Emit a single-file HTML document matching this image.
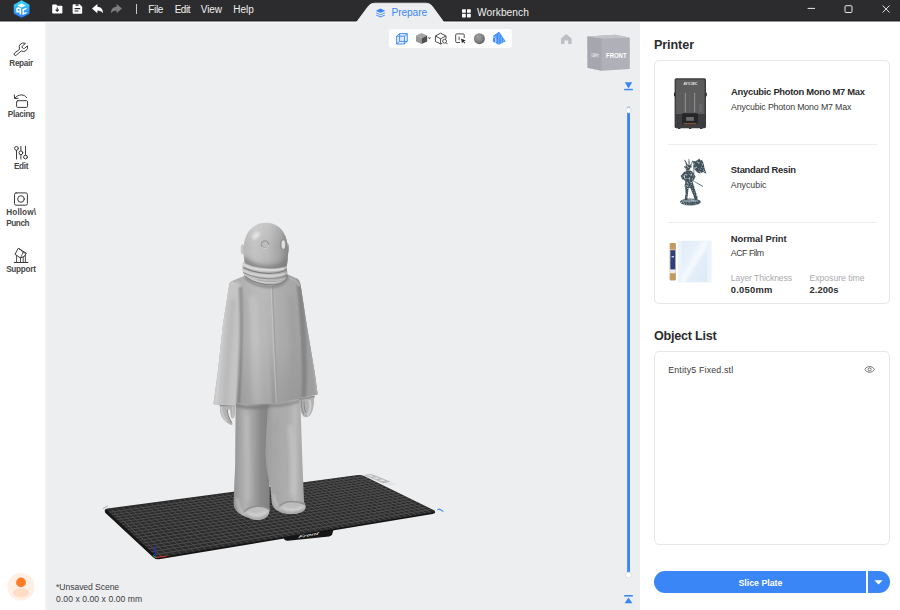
<!DOCTYPE html>
<html lang="en">
<head>
<meta charset="utf-8">
<title>Anycubic Photon Workshop</title>
<style>
*{box-sizing:border-box;margin:0;padding:0}
html,body{width:900px;height:610px;overflow:hidden;background:#fff}
body{font-family:"Liberation Sans",sans-serif;color:#333;position:relative;font-size:10px}
.abs{position:absolute}
.t{position:absolute;white-space:nowrap;line-height:1}
#titlebar{left:0;top:0;width:900px;height:21px;background:#2c2c2e;border-bottom:1px solid #222224}
#sidebar{left:0;top:21px;width:45px;height:589px;background:#fff}
#viewport{left:45px;top:21px;width:595px;height:589px;background:#edeef0;border-top:2px solid #f7f8f9;border-left:1px solid #f5f5f7}
#panel{left:640px;top:21px;width:260px;height:589px;background:#fff}
.menu{color:#f0f0f0;font-size:10px;top:5px}
.sb{font-size:8.1px;color:#333;font-weight:bold;letter-spacing:-0.2px}
.card{position:absolute;border:1px solid #e7e7e9;border-radius:5px;background:#fff}
.h{font-weight:bold;font-size:12.6px;color:#2c2c2e}
.b{font-weight:bold;font-size:9.2px;color:#2c2c2e}
.r{font-size:8.8px;color:#333}
.g{font-size:8.6px;color:#a9a9ad}
</style>
</head>
<body>
<div id="titlebar" class="abs"></div>
<div id="sidebar" class="abs"></div>
<div id="viewport" class="abs"></div>
<div id="panel" class="abs"></div>

<svg class="abs" style="left:0;top:0" width="900" height="610" viewBox="0 0 900 610">
<defs>
  <linearGradient id="gHead" x1="0" y1="0" x2="1" y2="0">
    <stop offset="0" stop-color="#b6b6b6"/><stop offset="0.25" stop-color="#c4c4c4"/><stop offset="0.55" stop-color="#bababa"/><stop offset="0.8" stop-color="#a4a4a4"/><stop offset="1" stop-color="#848484"/>
  </linearGradient>
  <linearGradient id="gHeadV" x1="0" y1="0" x2="0" y2="1">
    <stop offset="0" stop-color="#fff" stop-opacity="0.18"/><stop offset="0.5" stop-color="#fff" stop-opacity="0"/><stop offset="1" stop-color="#000" stop-opacity="0.12"/>
  </linearGradient>
  <linearGradient id="gCoat" gradientUnits="userSpaceOnUse" x1="238" y1="0" x2="300" y2="0">
    <stop offset="0" stop-color="#aeaeae"/><stop offset="0.3" stop-color="#bababa"/><stop offset="0.55" stop-color="#b6b6b6"/><stop offset="0.62" stop-color="#aeaeae"/><stop offset="1" stop-color="#a4a4a4"/>
  </linearGradient>
  <linearGradient id="gLegL" gradientUnits="userSpaceOnUse" x1="233" y1="0" x2="270" y2="0">
    <stop offset="0" stop-color="#8e8e8e"/><stop offset="0.14" stop-color="#a2a2a2"/><stop offset="0.35" stop-color="#b2b2b2"/><stop offset="0.55" stop-color="#a2a2a2"/><stop offset="0.75" stop-color="#8a8a8a"/><stop offset="1" stop-color="#808080"/>
  </linearGradient>
  <linearGradient id="gLegR" gradientUnits="userSpaceOnUse" x1="268" y1="0" x2="306" y2="0">
    <stop offset="0" stop-color="#9c9c9c"/><stop offset="0.15" stop-color="#aaaaaa"/><stop offset="0.5" stop-color="#acacac"/><stop offset="0.72" stop-color="#bababa"/><stop offset="0.9" stop-color="#a8a8a8"/><stop offset="1" stop-color="#9e9e9e"/>
  </linearGradient>
  <linearGradient id="gScarf" x1="0" y1="0" x2="1" y2="0">
    <stop offset="0" stop-color="#c4c4c4"/><stop offset="0.5" stop-color="#c0c0c0"/><stop offset="1" stop-color="#a8a8a8"/>
  </linearGradient>
  <radialGradient id="gSph" cx="0.4" cy="0.35" r="0.7"><stop offset="0" stop-color="#a2a2a2"/><stop offset="0.6" stop-color="#808080"/><stop offset="1" stop-color="#5e5e5e"/></radialGradient>
  <linearGradient id="gCoatV" x1="0" y1="0" x2="0" y2="1"><stop offset="0" stop-color="#000" stop-opacity="0"/><stop offset="1" stop-color="#000" stop-opacity="0.09"/></linearGradient>
  <linearGradient id="gSeam" gradientUnits="userSpaceOnUse" x1="0" y1="300" x2="0" y2="404"><stop offset="0" stop-color="#8c8c8c" stop-opacity="0"/><stop offset="0.5" stop-color="#8c8c8c" stop-opacity="0.15"/><stop offset="1" stop-color="#8c8c8c" stop-opacity="0.6"/></linearGradient>
  <filter id="b1" filterUnits="userSpaceOnUse" x="180" y="200" width="180" height="340"><feGaussianBlur stdDeviation="1"/></filter>
  <filter id="b2" filterUnits="userSpaceOnUse" x="180" y="200" width="180" height="340"><feGaussianBlur stdDeviation="2"/></filter>
  <filter id="b05" filterUnits="userSpaceOnUse" x="180" y="200" width="180" height="340"><feGaussianBlur stdDeviation="0.5"/></filter>
  <clipPath id="cpPlate"><path d="M107.5 508.6 L358 475 Q361.5 474.6 364.5 476.2 L433.5 510 Q436.5 511.6 432.5 512.4 L159 557.6 Q155.8 558 153.4 555.8 L105.2 512 Q103.4 509.4 107.5 508.6 Z"/></clipPath>
  <clipPath id="cpLegL"><use href="#pLegL"/></clipPath>
  <clipPath id="cpLegR"><use href="#pLegR"/></clipPath>
  <clipPath id="cpCoat"><use href="#pCoat"/></clipPath>
  <clipPath id="cpHead"><use href="#pHead"/></clipPath>
  <clipPath id="cpScarf"><use href="#pScarf"/></clipPath>
</defs>

<!-- build plate -->
<g>
  <path d="M280 531 L284.5 539.4 Q285.6 541 288 540.8 L329 536.6 Q331.4 536 332.2 534.2 L334 528 Z" fill="#161616"/>
  <path d="M105 512.5 L153.4 557.4 Q155.8 559.6 159 559.2 L432.5 514 Q436.5 513.2 434.6 511 L433 510 L159 556 L107 509 Z" fill="#141414"/>
  <path d="M107.5 508.6 L358 475 Q361.5 474.6 364.5 476.2 L433.5 510 Q436.5 511.6 432.5 512.4 L159 557.6 Q155.8 558 153.4 555.8 L105.2 512 Q103.4 509.4 107.5 508.6 Z" fill="#2b2b2b"/>
  <g clip-path="url(#cpPlate)"><path d="M111.3 509.4L162.1 556.9M117.1 508.6L168.5 555.9M122.8 507.8L174.9 554.8M128.6 507.0L181.2 553.8M134.3 506.2L187.5 552.7M139.9 505.4L193.8 551.7M145.5 504.6L200.0 550.6M151.1 503.9L206.2 549.6M156.7 503.1L212.3 548.6M162.2 502.3L218.4 547.6M167.7 501.5L224.5 546.6M173.2 500.8L230.6 545.6M178.7 500.0L236.6 544.6M184.1 499.3L242.5 543.6M189.5 498.5L248.4 542.6M194.8 497.8L254.3 541.6M200.2 497.0L260.2 540.7M205.5 496.3L266.0 539.7M210.7 495.6L271.8 538.7M216.0 494.8L277.5 537.8M221.2 494.1L283.3 536.8M226.4 493.4L289.0 535.9M231.6 492.7L294.6 535.0M236.7 492.0L300.2 534.0M241.8 491.2L305.8 533.1M246.9 490.5L311.4 532.2M252.0 489.8L316.9 531.3M257.0 489.1L322.4 530.4M262.0 488.4L327.8 529.5M267.0 487.7L333.2 528.6M271.9 487.1L338.6 527.7M276.9 486.4L344.0 526.8M281.8 485.7L349.3 525.9M286.6 485.0L354.6 525.0M291.5 484.3L359.9 524.1M296.3 483.7L365.1 523.3M301.1 483.0L370.3 522.4M305.9 482.3L375.5 521.5M310.7 481.7L380.7 520.7M315.4 481.0L385.8 519.8M320.1 480.4L390.9 519.0M324.8 479.7L396.0 518.2M329.5 479.1L401.0 517.3M334.1 478.4L406.0 516.5M338.7 477.8L411.0 515.7M343.3 477.1L416.0 514.8M347.9 476.5L420.9 514.0M352.5 475.9L425.8 513.2M357.0 475.2L430.7 512.4M108.0 512.5L365.2 476.4M110.5 514.9L368.9 478.3M113.0 517.3L372.7 480.2M115.5 519.8L376.5 482.1M118.1 522.3L380.4 484.1M120.8 524.8L384.3 486.0M123.5 527.3L388.3 488.0M126.2 529.9L392.3 490.0M128.9 532.5L396.4 492.1M131.7 535.2L400.5 494.1M134.5 537.9L404.7 496.2M137.4 540.7L408.9 498.3M140.3 543.4L413.2 500.5M143.3 546.3L417.6 502.6M146.3 549.1L422.0 504.8M149.4 552.0L426.4 507.1M152.5 555.0L430.9 509.3" stroke="#505050" stroke-width="0.9" fill="none"/></g>
  <path d="M105.6 510.6 L154.6 556.2" stroke="#161616" stroke-width="2.2" fill="none"/>
  <path d="M363.6 475 L371.4 474 L391 481.8 L383.4 483.4 Z" fill="#bcbcbe"/>
  <path d="M367.4 475.4 L371 475 L374 476.2 L370.4 476.7 Z M373 477.7 L376.6 477.3 L379.6 478.5 L376 479 Z M378.8 480 L382.4 479.6 L385.4 480.8 L381.8 481.3 Z" fill="#e4e4e6"/>
  <path d="M383.4 483.4 L391 481.8 L397 484.4 L389.6 486 Z" fill="#e6e6e8"/>
  <text x="0" y="0" transform="translate(297.8 538.2) rotate(-9.6) scale(1.6 0.75) skewX(-25)" font-family="Liberation Sans, sans-serif" font-weight="bold" font-size="5" fill="#dcdcdc">Front</text>
  <path d="M437.4 509.6 L439.6 509.2 L443.4 511.4" stroke="#4a90ff" stroke-width="1.2" fill="none"/>
  <path d="M103 508.6 L108 505.8" stroke="#9a9a9a" stroke-width="0.8" fill="none"/>
  <path d="M155.5 557.4 V546" stroke="#2030e0" stroke-width="1" fill="none"/>
  <path d="M155.6 557.6 L167 556" stroke="#e03030" stroke-width="1" fill="none"/>
  <path d="M155.6 557.6 L153 555.4" stroke="#20b030" stroke-width="1.2" fill="none"/>
</g>

<!-- figure -->
<g id="fig">
  <!-- trousers -->
  <path id="pLegL" d="M235.7 401 L235.2 465 L233.6 503 C233.6 511 240 515 249 518 C253 520 258 520.6 262 519.6 C267 518 269.6 515 269.7 509 L269.6 487 L269 440 L270 401 Z" fill="url(#gLegL)"/>
  <path id="pLegR" d="M268 401 C267.4 420 265.6 440 265.6 455 C265.8 470 269.4 480 270.4 487 L272 504 C274 510.5 282 514 290 514 C298 514.2 305.6 512 305.8 507 C305.6 504.6 304.4 503 304 501 L302.5 465 L300.2 397 Z" fill="url(#gLegR)"/>
  <g clip-path="url(#cpLegL)">
    
    <path d="M247 415 C246 445 250 470 248 500" stroke="#c4c4c4" stroke-width="4" fill="none" filter="url(#b2)" opacity="0.6"/>
    <path d="M238 404 C237 440 236 480 235 505" stroke="#9c9c9c" stroke-width="2.4" fill="none" filter="url(#b1)" opacity="0.7"/>
    <path d="M236 405.6 C250 408.6 262 407.6 270 405.6" stroke="#7a7a7a" stroke-width="3.4" fill="none" filter="url(#b1)" opacity="0.8"/>
    <path d="M244 512 C246 509 252 506.4 258 506.4 C264 506.4 268 508 269.6 510 C269 516 265 519.6 258 520 C251 519.6 246 516 244 512 Z" fill="#bebebe" filter="url(#b05)"/>
    <path d="M248 513 C253 516.2 261 516 266.6 511.6" stroke="#d4d4d4" stroke-width="2.4" fill="none" filter="url(#b1)"/>
    <path d="M246 515.4 C251 520 262 521 268.6 514" stroke="#9a9a9a" stroke-width="1.6" fill="none" filter="url(#b1)"/>
    <path d="M243.4 512.6 C246 509 252 506.2 258 506.2 C264 506.2 268 507.8 270 510" stroke="#8c8c8c" stroke-width="1.5" fill="none" filter="url(#b05)" opacity="0.9"/>
    <path d="M237 498 C237.6 506 240 511 245 514.6" stroke="#c8c8c8" stroke-width="2" fill="none" filter="url(#b1)" opacity="0.8"/>
  </g>
  <g clip-path="url(#cpLegR)">
    <path d="M290 425 C293 450 294 475 293 495" stroke="#cacaca" stroke-width="4.5" fill="none" filter="url(#b2)" opacity="0.65"/>
    <path d="M276 420 C275 450 275 480 277 503" stroke="#a0a0a0" stroke-width="3" fill="none" filter="url(#b2)" opacity="0.7"/>
    <path d="M268 420 C268 450 270 480 272 503" stroke="#a8a8a8" stroke-width="2" fill="none" filter="url(#b1)" opacity="0.7"/>
    <path d="M266 405.6 C280 406.6 292 403.6 301 400.6" stroke="#808080" stroke-width="3" fill="none" filter="url(#b1)" opacity="0.7"/>
    <path d="M278.6 507 C281 504 286 501.6 291 501.6 C297 501.6 302 503 304.6 504.6 C306.6 508 304 513 292 514.2 C285 514 280.6 511 278.6 507 Z" fill="#bcbcbc" filter="url(#b05)"/>
    <path d="M283 508 C288 511 298 510.6 303.6 506.6" stroke="#d2d2d2" stroke-width="2.4" fill="none" filter="url(#b1)"/>
    <path d="M281 510.4 C286 514.6 298 515 305.6 508.6" stroke="#9a9a9a" stroke-width="1.6" fill="none" filter="url(#b1)"/>
    <path d="M278 507.8 C281 504 286 501.4 291 501.4 C297 501.4 302 502.8 305 504.6" stroke="#8c8c8c" stroke-width="1.5" fill="none" filter="url(#b05)" opacity="0.9"/>
    <path d="M273.6 494 C274 500 276 505 280 509" stroke="#c6c6c6" stroke-width="2" fill="none" filter="url(#b1)" opacity="0.8"/>
  </g>
  <!-- hands -->
  <path d="M220 404 C219.6 409 220.2 414 221.6 416.6 C223.4 420 226.6 423 230 424.6 C231.4 425.2 232.8 424.8 232.6 423.6 C232 421.6 229.6 418.6 228.6 416 C227.6 413.6 227.4 411 228.4 409.6 C229.2 408.8 230 409.6 230.2 411 C230.4 414 230.6 416.6 231.6 418 C232.6 419 233.8 418.4 234.4 416.6 C235.2 413.6 235 409 234.8 404 Z" fill="#b2b2b2"/>
  <path d="M221.4 406 C221.2 412 222.6 417 227 421.4" stroke="#c8c8c8" stroke-width="2" fill="none" filter="url(#b05)"/>
  <path d="M227.6 409.6 C227 413 228 416.6 231.6 422.6" stroke="#8a8a8a" stroke-width="1.1" fill="none" filter="url(#b05)"/>
  <path d="M232.6 406 C233 411 233 415 232.4 417.6" stroke="#c2c2c2" stroke-width="1.4" fill="none" filter="url(#b05)"/>
  <path d="M219.6 405.6 H235.4" stroke="#8a8a8a" stroke-width="1.4" fill="none" filter="url(#b05)" opacity="0.8"/>
  <path d="M299.4 397 C299 404 300 411 302.6 415.6 C304.6 418.4 308.6 417.6 310.6 414.6 C313 411 314.4 404 314 396 Z" fill="#b2b2b2"/>
  <path d="M309.4 400 C311 405 310.4 411 307.6 415.4" stroke="#cccccc" stroke-width="2.4" fill="none" filter="url(#b05)"/>
  <path d="M301.4 400 C301.2 406 302.2 411 303.8 414 M304 401 C304 406 304.6 410 306 412.6" stroke="#8c8c8c" stroke-width="1.1" fill="none" filter="url(#b05)"/>
  <path d="M299 399.4 L315 396.4" stroke="#8a8a8a" stroke-width="1.6" fill="none" filter="url(#b05)" opacity="0.8"/>
  <!-- coat -->
  <path id="pCoat" d="M245 275.4 L232 281 C230 282 229.2 283.6 229 286 L223 324 L217.7 373 L213.4 404.3 L235.7 405.7 L235.8 402.7 C250 404.6 268 405 280 402.4 L300 398.6 L300 397.8 L317.7 394.5 L314.8 373 L306.6 324 L300.6 285 C300.2 281.6 298.8 279.4 296.4 278.2 L287 274 Z" fill="url(#gCoat)"/>
  <g clip-path="url(#cpCoat)">
    <!-- left sleeve -->
    <path d="M226 278 L241 286 C242 320 241.4 360 238 408 L210 408 Z" fill="#c5c5c5"/>
    <path d="M233 300 C230 340 227 370 225 406" stroke="#b4b4b4" stroke-width="5" fill="none" filter="url(#b2)" opacity="0.8"/>
    <path d="M226 292 C221.6 340 218.6 370 216 404" stroke="#d2d2d2" stroke-width="3" fill="none" filter="url(#b1)" opacity="0.9"/>
    <path d="M240.4 287 C242 320 241.4 360 238.2 406" stroke="#868686" stroke-width="3" fill="none" filter="url(#b1)" opacity="0.9"/>
    <!-- right sleeve -->
    <path d="M296 276 L304 280 L320 394 L300 400 C303 360 301 320 296 286 Z" fill="#9e9e9e"/>
    <path d="M299.8 286 C302.8 320 305.8 360 303.6 398" stroke="#828282" stroke-width="5" fill="none" filter="url(#b1)" opacity="0.9"/>
    <path d="M305.2 292 C310.2 325 314.4 365 317 394" stroke="#b8b8b8" stroke-width="2.2" fill="none" filter="url(#b1)" opacity="0.85"/>
    <!-- body -->
    <path d="M252 296 C256 330 254 370 258 404" stroke="#c4c4c4" stroke-width="8" fill="none" filter="url(#b2)" opacity="0.7"/>
    <path d="M246 300 C247 330 246 370 245 404" stroke="#a8a8a8" stroke-width="3" fill="none" filter="url(#b2)" opacity="0.6"/>
    <path d="M238 340 L300 340 L300 406 L236 406 Z" fill="url(#gCoatV)"/>
    <path d="M268.4 300 C269.6 335 272 370 274.2 404" stroke="url(#gSeam)" stroke-width="4" fill="none" filter="url(#b1)"/>
    <path d="M271.2 286 C272.2 320 274.2 360 276.4 404" stroke="#c8c8c8" stroke-width="0.9" fill="none" filter="url(#b05)" opacity="0.8"/>
    <path d="M272.6 286 C273.6 320 275.6 360 277.8 404" stroke="#9c9c9c" stroke-width="1.3" fill="none" filter="url(#b05)" opacity="0.75"/>
    <path d="M291 296 C294 330 295 370 294 400" stroke="#9c9c9c" stroke-width="7" fill="none" filter="url(#b2)" opacity="0.6"/>
    <path d="M231 284.8 C234 282 238 282 240.6 285.4" stroke="#cacaca" stroke-width="1.4" fill="none" filter="url(#b1)"/>
    <path d="M289 278 C293 279 297 281 299.4 286" stroke="#b4b4b4" stroke-width="1.2" fill="none" filter="url(#b05)"/>
    <path d="M245 277.2 C253 285 262 286.6 270 287 C279 287 285 283 288 277" stroke="#7a7a7a" stroke-width="2.2" fill="none" filter="url(#b1)" opacity="0.85"/>
    <path d="M236 402.6 C250 404.6 268 405 280 402.4 L300 398.6" stroke="#a0a0a0" stroke-width="1" fill="none" filter="url(#b05)" opacity="0.7"/>
  </g>
  <!-- head -->
  <ellipse cx="242.6" cy="249.6" rx="1.9" ry="5" fill="#c6c6c6"/>
  <path d="M287.6 243 C289.6 245 289.6 252 287.6 254 Z" fill="#a2a2a2"/>
  <path id="pHead" d="M244.8 264 C242.6 252 242.8 240 248.6 231.6 C256.6 219.8 275.6 220 283 231.6 C288.8 240.6 289 253 286.8 266 C278 272 254 271.6 244.8 264 Z" fill="url(#gHead)"/>
  <g clip-path="url(#cpHead)">
    <rect x="240" y="220" width="52" height="54" fill="url(#gHeadV)"/>
    <ellipse cx="256" cy="235.4" rx="4.6" ry="2.7" transform="rotate(-42 256 235.4)" fill="#e2e2e2" filter="url(#b1)"/>
    <path d="M243 259 C254 271 278 272 288 261" stroke="#7a7a7a" stroke-width="6" fill="none" filter="url(#b2)" opacity="0.8"/>
    <path d="M286 234 C289 245 289 256 286 266" stroke="#8a8a8a" stroke-width="3" fill="none" filter="url(#b1)" opacity="0.6"/>
  </g>
  <circle cx="265" cy="244.4" r="3.7" fill="#bcbcbc" stroke="#868686" stroke-width="0.8"/>
  <path d="M262 247 A3.7 3.7 0 0 0 268.6 245" stroke="#dedede" stroke-width="0.8" fill="none"/>
  <ellipse cx="282.6" cy="244.4" rx="2.5" ry="4.8" fill="#8e8e8e"/><ellipse cx="283.3" cy="244.6" rx="1.9" ry="4.3" fill="#dedede"/>
  <!-- scarf -->
  <path id="pScarf" d="M243.3 262 C241.6 266 242 273 245 275.7 C248 279 254 281.6 261.7 283.3 C266 284.6 272 285 278.3 283.7 C283 282.6 287.3 279 287.4 274 L286.6 265.4 C280 269.6 256 270.4 243.3 262 Z" fill="url(#gScarf)"/>
  <g clip-path="url(#cpScarf)">
    <path d="M243.3 264.4 C252 270.4 276 272 287 267.4" stroke="#d8d8d8" stroke-width="2.2" fill="none" filter="url(#b05)"/>
    <path d="M243 271 C254 276.4 276 278 287.4 272.6" stroke="#d2d2d2" stroke-width="2" fill="none" filter="url(#b05)"/>
    <path d="M250 279.6 C260 283 276 283.6 286 278.4" stroke="#cecece" stroke-width="1.8" fill="none" filter="url(#b05)"/>
    <path d="M243.4 267.7 C250 271 258 273 268.3 273.3 C276 273.4 283 272 287 269.3" stroke="#7e7e7e" stroke-width="1.3" fill="none" filter="url(#b05)"/>
    <path d="M242.5 272.3 C250 276 258 278.4 268.3 278.7 C276 278.8 283 277.4 287.4 275" stroke="#909090" stroke-width="1.1" fill="none" filter="url(#b05)"/>
    <path d="M257 279.7 C263 281.6 270 282 276 281.4 C279 281 281.6 280.4 283 279.7" stroke="#a0a0a0" stroke-width="0.8" fill="none" filter="url(#b05)"/>
    <path d="M283 262 C288 268 288 278 282 284" stroke="#8c8c8c" stroke-width="3" fill="none" filter="url(#b1)" opacity="0.55"/>
  </g>
  <path d="M244.6 275.4 C248 279.4 254 281.8 261.7 283.6 C266 284.9 272 285.3 278.3 284 C283 282.8 286.6 280 287.5 275.4" stroke="#7c7c7c" stroke-width="1" fill="none" filter="url(#b05)"/>
</g>

<!-- viewport toolbar -->
<rect x="389" y="29" width="123" height="19" rx="3" fill="#fff"/>
<g>
  <!-- wire cube -->
  <path d="M396.6 36.2 H404.4 V44 H396.6 Z M399.6 33.6 H407.3 V41.4 H399.6 Z" fill="#d6e6ff" fill-opacity="0.7" stroke="#3b86f7" stroke-width="0.9" stroke-linejoin="round"/>
  <path d="M396.6 36.2 L399.6 33.6 M404.4 36.2 L407.3 33.6 M404.4 44 L407.3 41.4 M396.6 44 L399.6 41.4" stroke="#3b86f7" stroke-width="0.9" fill="none"/>
  <!-- solid cube -->
  <path d="M421.6 33 L427.2 35.6 L421.6 38.2 L416 35.6 Z" fill="#a4a4a4"/>
  <path d="M416 35.6 L421.6 38.2 V44 L416 41.4 Z" fill="#969696"/>
  <path d="M427.2 35.6 L421.6 38.2 V44 L427.2 41.4 Z" fill="#4e4e4e"/>
  <path d="M428 37.4 H430.8 L429.4 39.2 Z" fill="#333"/>
  <!-- cube + magnifier -->
  <path d="M440.6 33.2 L446 36 V39 M440.6 33.2 L435.4 36 V41.4 L440.6 44 V38.8 L435.4 36 M440.6 38.8 L446 36 M440.6 44 L442.4 43.2" fill="none" stroke="#3a3a3a" stroke-width="0.9" stroke-linejoin="round"/>
  <circle cx="444.6" cy="41.2" r="1.9" fill="none" stroke="#3a3a3a" stroke-width="0.9"/>
  <path d="M446 42.6 L447.6 44.2" stroke="#3a3a3a" stroke-width="0.9"/>
  <!-- select -->
  <path d="M464.2 38 V34.8 A0.9 0.9 0 0 0 463.3 33.9 H456.6 A0.9 0.9 0 0 0 455.7 34.8 V41.6 A0.9 0.9 0 0 0 456.6 42.5 H460" fill="none" stroke="#3a3a3a" stroke-width="0.9"/>
  <path d="M459.1 36.6 V40.2" stroke="#3a3a3a" stroke-width="0.9"/>
  <path d="M461 38.6 L465.8 40.6 L463.8 41.2 L465.4 43 L464.6 43.6 L463 41.8 L462 43.4 Z" fill="#2a2a2a"/>
  <!-- sphere -->
  <circle cx="479.4" cy="38.7" r="5.5" fill="url(#gSph)"/>
  <!-- prism -->
  <path d="M499 32.2 L505.2 41.4 L498.6 44.8 L492.8 41.6 L493.4 36 Z" fill="#3b8dff"/>
  <path d="M499 32.2 L498.6 44.8 M496 34.4 L495.8 43.2 M501.4 35.8 L501.2 43.4 M503.4 38.8 L503.2 42.4" stroke="#a9ccff" stroke-width="0.6" fill="none"/>
  <path d="M493.4 36 L499 32.2 L505.2 41.4" stroke="#2a7af0" stroke-width="0.7" fill="none"/>
  <path d="M493.6 37 C495.4 37 496.2 39 495.6 42.6" stroke="#dceaff" stroke-width="0.8" fill="none"/>
</g>


<!-- home + cube -->
<path d="M566.2 34 L571.6 38.6 V44 H568.2 V40.6 H564.4 V44 H561 V38.6 Z" fill="#bdbdc4"/>
<path d="M587.4 36.4 L615.4 34.8 L629.8 37.8 L629.8 69 L601.6 70.8 L587.6 67.8 Z" fill="#b0b0b8"/>
<path d="M587.4 36.4 L601.6 38.6 L601.6 70.8 L587.6 67.8 Z" fill="#a6a6ae"/>
<path d="M587.4 36.4 L615.4 34.8 L629.8 37.8 L601.6 38.6 Z" fill="#c2c2c8"/>
<text x="606" y="57.6" font-family="Liberation Sans, sans-serif" font-weight="bold" font-size="6.6" fill="#fff" textLength="20.6" lengthAdjust="spacingAndGlyphs">FRONT</text>
<text x="0" y="0" transform="translate(591.4 56.6) skewY(10)" font-family="Liberation Sans, sans-serif" font-weight="bold" font-size="5.6" fill="#f0f0f4" textLength="7.4" lengthAdjust="spacingAndGlyphs">LEFT</text>

<!-- layer slider -->
<path d="M624.8 82.2 H632.2 L628.5 88.4 Z" fill="#3b86f7"/>
<rect x="624.2" y="88.8" width="8.6" height="1.5" fill="#3b86f7"/>
<rect x="627.1" y="106.8" width="2.9" height="468.2" fill="#3b86f7"/>
<circle cx="628.5" cy="110.2" r="2.7" fill="#fff" stroke="#d4d4d8" stroke-width="0.7"/>
<circle cx="628.5" cy="575" r="2.9" fill="#fff" stroke="#d4d4d8" stroke-width="0.7"/>
<rect x="624.2" y="595" width="8.6" height="1.6" fill="#3b86f7"/>
<path d="M628.5 597.6 L632.4 603.2 H624.6 Z" fill="#3b86f7"/>

<!-- avatar -->
<circle cx="21" cy="586.8" r="13.7" fill="#fff0e6"/>
<ellipse cx="21" cy="592.8" rx="8.2" ry="4.6" fill="#ffdcc6"/>
<circle cx="21" cy="582.4" r="4.9" fill="#ff7d26"/>
</svg>

<!-- TITLEBAR -->
<svg class="abs" style="left:0;top:0" width="900" height="24" viewBox="0 0 900 24">
  <defs>
    <linearGradient id="lg" x1="0" y1="0" x2="0" y2="1"><stop offset="0" stop-color="#38dcff"/><stop offset="1" stop-color="#2a7bf5"/></linearGradient>
  </defs>
  <!-- logo -->
  <path d="M21.6 0.6 L29.2 4.8 L29.2 13.4 L21.6 17.6 L14 13.4 L14 4.8 Z" fill="url(#lg)" stroke="url(#lg)" stroke-width="0.5" stroke-linejoin="round"/>
  <path d="M21.6 3.4 L25.8 5.5 L21.6 7.6 L17.4 5.5 Z" fill="#fff"/>
  <path d="M17 12.6 V8.8 L18.6 7.9 L20.4 9 V14.4 M17 11 L20.4 12" fill="none" stroke="#fff" stroke-width="1.5"/>
  <path d="M26.6 8.4 L23.2 9.8 V14 L26.6 12.6" fill="none" stroke="#fff" stroke-width="1.5"/>
  <!-- open -->
  <path d="M52.6 4.6 h3.6 l1.2 1.2 h4.2 a0.8 0.8 0 0 1 0.8 0.8 v6.2 a0.8 0.8 0 0 1 -0.8 0.8 h-8.6 a0.8 0.8 0 0 1 -0.8 -0.8 v-7.4 a0.8 0.8 0 0 1 0.8 -0.8z" fill="#fff"/>
  <path d="M57.2 7.4 v3.6 M55.6 9.6 l1.6 1.6 l1.6 -1.6" fill="none" stroke="#2c2c2e" stroke-width="1.1"/>
  <!-- save -->
  <path d="M73.6 4.2 h6 l2.6 2.6 v6 a1 1 0 0 1 -1 1 h-7.6 a1 1 0 0 1 -1 -1 v-7.6 a1 1 0 0 1 1 -1z" fill="#fff"/>
  <path d="M75.6 4.4 h3 v1.4 h-3z" fill="#2c2c2e"/><path d="M74.6 8.6 h5.6 M74.6 11 h3.8" stroke="#2c2c2e" stroke-width="1.2" fill="none"/>
  <!-- undo -->
  <path d="M92 8.6 L97.4 4 V6.8 C101 7 103 9.4 103 13.2 C101.6 11.2 100 10.4 97.4 10.4 V13.2 Z" fill="#fff"/>
  <!-- redo -->
  <path d="M122 8.6 L116.6 4 V6.8 C113 7 111 9.4 111 13.2 C112.4 11.2 114 10.4 116.6 10.4 V13.2 Z" fill="#7d7e82"/>
  <rect x="136" y="4" width="1" height="10" fill="#c9c9cc"/>
  <!-- tab -->
  <rect x="0" y="21" width="900" height="1" fill="#2c2c2e" fill-opacity="0.5"/>
  <path d="M356.4 23 L357 21.6 L368.4 6.2 Q370.6 3.2 374.6 3.2 H426 Q430 3.2 432.2 6.2 L443.4 21.6 L444 23 Z" fill="#edeef0" stroke="#f6f7f8" stroke-width="0.8"/>
  <rect x="357.6" y="21.4" width="85.4" height="2.6" fill="#edeef0"/>
  <!-- prepare icon -->
  <g fill="#3b86f7">
    <path d="M380.5 8.6 L385.2 10.8 L380.5 13 L375.8 10.8 Z"/>
    <path d="M376.6 12.6 L375.8 13 L380.5 15.2 L385.2 13 L384.4 12.6 L380.5 14.4 Z"/>
    <path d="M376.6 14.8 L375.8 15.2 L380.5 17.4 L385.2 15.2 L384.4 14.8 L380.5 16.6 Z"/>
  </g>
  <!-- workbench icon -->
  <g fill="#fff">
    <rect x="462" y="9.2" width="3.8" height="3.6" rx="0.6"/><rect x="467" y="9.2" width="3.8" height="3.6" rx="0.6"/>
    <rect x="462" y="13.8" width="3.8" height="3.6" rx="0.6"/><rect x="467" y="13.8" width="3.8" height="3.6" rx="0.6"/>
  </g>
  <!-- window controls -->
  <rect x="807.6" y="7.9" width="7.4" height="1" fill="#e8e8e8"/>
  <rect x="845" y="5.7" width="7" height="6.8" rx="1" fill="none" stroke="#e8e8e8" stroke-width="1"/>
  <path d="M882.6 5.5 L889.6 12.5 M889.6 5.5 L882.6 12.5" stroke="#e8e8e8" stroke-width="1" fill="none"/>
</svg>

<!-- SIDEBAR -->

<svg class="abs" style="left:0;top:30px" width="45" height="250" viewBox="0 30 45 250" fill="none" stroke="#3c3c3c" stroke-width="1" stroke-linecap="round" stroke-linejoin="round">
  <!-- repair -->
  <path transform="translate(-0.3 0.6) translate(23.6 47) scale(0.93) translate(-23.6 -47)" stroke-width="1.07" d="M19.44 48.36 A4.6 4.6 0 0 1 25.88 42.55 L22.84 45.11 A1.7 1.7 0 0 0 25.02 47.71 L28.06 45.15 A4.6 4.6 0 0 1 21.34 50.56 L16.02 55.16 A1.45 1.45 0 0 1 14.12 52.96 Z"/>
  <!-- placing -->
  <rect x="16.6" y="100.7" width="10.9" height="6.7" rx="1"/>
  <path d="M26.6 97.6 C24.6 94 18.6 93.6 14.8 98.2"/>
  <path d="M14.3 95 L14.6 98.5 L18 98.4" />
  <!-- edit -->
  <circle cx="16.5" cy="148.4" r="1.9"/><path d="M16.5 150.4 V159"/>
  <circle cx="20.9" cy="152.8" r="1.9"/><path d="M20.9 146.3 V150.8 M20.9 154.8 V159"/>
  <circle cx="25.5" cy="157" r="1.9"/><path d="M25.5 146.3 V155"/>
  <!-- hollow -->
  <rect x="14.5" y="192.9" width="12.9" height="12.3" rx="1.6"/>
  <circle cx="21" cy="199" r="3.3"/>
  <!-- support -->
  <path d="M14.2 262.5 H28"/>
  <path d="M18.6 248.5 L26.2 253.2 L24.4 256.4 L20.5 258 L15.3 254.5 Z"/>
  <path d="M18.6 248.5 L21.2 250 L23 252.6 L20.5 258 M23 252.6 L26.2 253.2" stroke-width="0.8"/>
  <path d="M16.6 255.6 V262.5 M20.5 258 V262.5 M25.4 255.2 V262.5 M23.2 257 V262.5" stroke-width="0.9"/>
</svg>

<!-- STATUS -->

<!-- PANEL -->
<div class="card" style="left:654px;top:60px;width:236px;height:243.5px"></div>
<div class="abs" style="left:668px;top:144px;width:209px;height:1px;background:#ededf0"></div>
<div class="abs" style="left:668px;top:222px;width:209px;height:1px;background:#ededf0"></div>

<div class="card" style="left:654px;top:351px;width:236px;height:194px"></div>

<div class="abs" style="left:654px;top:571px;width:212px;height:22px;background:#3b86f7;border-radius:11px 0 0 11px"></div>
<div class="abs" style="left:867.5px;top:571px;width:22.5px;height:22px;background:#3b86f7;border-radius:0 11px 11px 0"></div>
<svg class="abs" style="left:870px;top:576px" width="16" height="12" viewBox="870 576 16 12"><path d="M874.4 580.2 H882.6 L878.5 584.6 Z" fill="#fff"/></svg>
<svg class="abs" style="left:660px;top:70px" width="64" height="220" viewBox="660 70 64 220">
  <defs>
    <filter id="pb" x="-10%" y="-10%" width="120%" height="120%"><feGaussianBlur stdDeviation="0.35"/></filter>
    <filter id="spk" x="-5%" y="-5%" width="110%" height="110%">
      <feTurbulence type="fractalNoise" baseFrequency="0.55" numOctaves="2" seed="7" result="n"/>
      <feColorMatrix in="n" type="matrix" values="0 0 0 0 0.55  0 0 0 0 0.65  0 0 0 0 0.69  3 0 0 0 -1.6" result="sp"/>
      <feComposite in="sp" in2="SourceAlpha" operator="in" result="spi"/>
      <feMerge result="m"><feMergeNode in="SourceGraphic"/><feMergeNode in="spi"/></feMerge>
      <feGaussianBlur in="m" stdDeviation="0.3"/>
    </filter>
    <linearGradient id="gFilm" x1="0" y1="0" x2="1" y2="1">
      <stop offset="0" stop-color="#e0ecf8"/><stop offset="0.35" stop-color="#e8f1fa"/><stop offset="0.5" stop-color="#f5fafe"/><stop offset="0.62" stop-color="#e3eef9"/><stop offset="1" stop-color="#dceaf7"/>
    </linearGradient>
  </defs>
  <!-- printer -->
  <g filter="url(#pb)">
    <rect x="674.6" y="78.2" width="31.4" height="50" rx="1.6" fill="#3a3a3c"/>
    <rect x="676" y="79.6" width="28.6" height="34.6" rx="0.8" fill="#5b5b5d"/>
    <rect x="674" y="92.6" width="1.2" height="3.6" fill="#2a2a2a"/><rect x="705.6" y="92.6" width="1.2" height="3.6" fill="#2a2a2a"/>
    <rect x="684.8" y="92.8" width="1.1" height="19.4" fill="#8e8e90"/><rect x="694.1" y="92.8" width="1.1" height="19.4" fill="#8e8e90"/>
    <rect x="689.6" y="92.8" width="0.6" height="19.4" fill="#6a6a6c"/>
    <rect x="699" y="104" width="3.4" height="8" fill="#66666a"/>
    <rect x="675.2" y="114.2" width="30.2" height="13.4" fill="#3e3e40"/>
    <rect x="682" y="113.2" width="16" height="11" rx="0.8" fill="#262628"/>
    <rect x="686.2" y="117" width="7.6" height="3.8" fill="#6c6c70"/>
    <rect x="683.6" y="123.4" width="12.8" height="0.7" fill="#c46a3a"/>
    <rect x="678" y="128" width="2.4" height="0.9" fill="#2a2a2a"/><rect x="689" y="128" width="2.4" height="0.9" fill="#2a2a2a"/><rect x="700" y="128" width="2.4" height="0.9" fill="#2a2a2a"/>
    <text x="683.4" y="85.4" font-family="Liberation Sans, sans-serif" font-weight="bold" font-size="3" fill="#e8e8e8" textLength="14" lengthAdjust="spacingAndGlyphs">ANYCUBIC</text>
  </g>
  <!-- resin figure -->
  <g filter="url(#spk)" fill="#42535b">
    <ellipse cx="690.4" cy="202" rx="10.4" ry="3.4" fill="#4a5b63"/>
    <ellipse cx="689.8" cy="200.6" rx="8.4" ry="1.7" fill="#7a8e97"/>
    <path d="M685 185 L688.8 186.4 L688 193 L687.4 200 L684.6 200 L685.6 193 Z"/>
    <path d="M689.6 186 L693.6 185 L695.4 191 L697.6 197 L697.2 200 L694.8 199.8 L692.8 194 Z"/>
    <path d="M684.4 186.6 L685.4 181.6 L684.6 176 L683.6 172.6 L686.4 170.2 L690.6 170.4 L693.6 172.6 L693.4 177 L692.4 181.6 L694.4 186.4 L689.4 188 Z"/>
    <path d="M683.8 172.4 L680.6 175.8 L682 179 L685.4 181 L686 179.4 L683.4 176.6 L685 174 Z"/>
    <path d="M693.4 172.8 L695.6 176.6 L693.6 180.6 L692.4 179.6 L693.4 176.6 Z"/>
    <ellipse cx="687.8" cy="167.4" rx="2.5" ry="2.8"/>
    <path d="M684.6 166 L691.2 165.6 L691.8 167.4 L684 167.6 Z"/>
    <path d="M686.4 165.6 L684.2 160 L685 159.8 L687.6 164.6 Z M688.6 164.8 L688.4 159.2 L689.2 159.2 L689.8 165 Z M690 165.6 L692.6 160.4 L693.2 160.8 L691 166.2 Z"/>
    <path d="M693.8 161.4 L697 160.4 L699.4 158.4 L700.2 160.6 L702 160 L703.6 163.4 L704.6 168.6 L706.4 173.8 L703 172 L700 173.6 L697.4 172.6 L694.2 169 Z" fill="#3e4f58"/>
    <path d="M693.5 161 L693.9 176" stroke="#42535b" stroke-width="0.8" fill="none"/>
    <path d="M689 178.4 L702.8 186.4" stroke="#4e6068" stroke-width="0.9" fill="none"/>
  </g>
  <!-- film -->
  <g filter="url(#pb)">
    <rect x="669.7" y="243" width="6.2" height="37.4" rx="0.8" fill="#c59a62"/>
    <rect x="669.9" y="249.6" width="5.8" height="23.6" fill="#e9e9ee"/>
    <rect x="670.3" y="250.2" width="5" height="19.2" fill="#2d3f7c"/>
    <rect x="671.6" y="256" width="2.4" height="1.4" fill="#c8d0e8"/>
    <rect x="677.8" y="240.6" width="33.9" height="42" fill="#ecf4fb"/>
    <rect x="681.8" y="241.2" width="25.6" height="40.8" fill="url(#gFilm)"/>
  </g>
</svg>
<svg class="abs" style="left:862px;top:363px" width="14" height="12" viewBox="862 363 14 12">
  <path d="M864.8 369.4 C866.8 365.6 872.2 365.6 874.4 369.4 C872.2 373.2 866.8 373.2 864.8 369.4 Z" fill="none" stroke="#555" stroke-width="0.8"/>
  <circle cx="869.6" cy="369.4" r="1.5" fill="none" stroke="#555" stroke-width="0.8"/>
</svg>

<div class="t" style="left:148.3px;top:4px;font-size:10px;line-height:11px;letter-spacing:-0.356px;color:#f0f0f0">File</div>
<div class="t" style="left:174.7px;top:4px;font-size:10px;line-height:11px;letter-spacing:-0.484px;color:#f0f0f0">Edit</div>
<div class="t" style="left:200.8px;top:4px;font-size:10px;line-height:11px;letter-spacing:-0.075px;color:#f0f0f0">View</div>
<div class="t" style="left:233.3px;top:4px;font-size:10px;line-height:11px;letter-spacing:-0.020px;color:#f0f0f0">Help</div>
<div class="t" style="left:391.5px;top:7px;font-size:10.2px;line-height:11px;letter-spacing:-0.107px;color:#3b86f7">Prepare</div>
<div class="t" style="left:477.0px;top:7px;font-size:10.2px;line-height:11px;letter-spacing:0.073px;color:#f0f0f0">Workbench</div>
<div class="t" style="left:9.3px;top:59px;font-size:8.2px;line-height:9px;letter-spacing:-0.331px;font-weight:bold;color:#484848">Repair</div>
<div class="t" style="left:7.8px;top:110px;font-size:8.2px;line-height:9px;letter-spacing:-0.304px;font-weight:bold;color:#484848">Placing</div>
<div class="t" style="left:14.0px;top:162px;font-size:8.2px;line-height:9px;letter-spacing:-0.367px;font-weight:bold;color:#484848">Edit</div>
<div class="t" style="left:6.3px;top:208px;font-size:8.2px;line-height:9px;letter-spacing:0.084px;font-weight:bold;color:#484848">Hollow\</div>
<div class="t" style="left:6.3px;top:219px;font-size:8.2px;line-height:9px;letter-spacing:-0.446px;font-weight:bold;color:#484848">Punch</div>
<div class="t" style="left:6.2px;top:265px;font-size:8.2px;line-height:9px;letter-spacing:-0.284px;font-weight:bold;color:#484848">Support</div>
<div class="t" style="left:56.1px;top:582px;font-size:8.6px;line-height:10px;letter-spacing:-0.074px;color:#3c3c3e">*Unsaved Scene</div>
<div class="t" style="left:56.1px;top:594px;font-size:8.6px;line-height:10px;letter-spacing:0.051px;color:#3c3c3e">0.00 x 0.00 x 0.00 mm</div>
<div class="t" style="left:653.9px;top:38px;font-size:12.6px;line-height:14px;letter-spacing:-0.071px;font-weight:bold;color:#2c2c2e">Printer</div>
<div class="t" style="left:731.1px;top:86px;font-size:9.4px;line-height:11px;letter-spacing:-0.280px;font-weight:bold;color:#2c2c2e">Anycubic Photon Mono M7 Max</div>
<div class="t" style="left:731.1px;top:102px;font-size:8.8px;line-height:10px;letter-spacing:-0.148px;color:#3a3a3a">Anycubic Photon Mono M7 Max</div>
<div class="t" style="left:730.8px;top:164px;font-size:9.4px;line-height:11px;letter-spacing:-0.269px;font-weight:bold;color:#2c2c2e">Standard Resin</div>
<div class="t" style="left:730.8px;top:180px;font-size:8.8px;line-height:10px;color:#3a3a3a">Anycubic</div>
<div class="t" style="left:730.8px;top:233px;font-size:9.4px;line-height:11px;letter-spacing:-0.039px;font-weight:bold;color:#2c2c2e">Normal Print</div>
<div class="t" style="left:730.8px;top:248px;font-size:8.8px;line-height:10px;letter-spacing:-0.470px;color:#3a3a3a">ACF Film</div>
<div class="t" style="left:730.8px;top:273px;font-size:8.6px;line-height:10px;letter-spacing:-0.081px;color:#a9a9ad">Layer Thickness</div>
<div class="t" style="left:809.4px;top:273px;font-size:8.6px;line-height:10px;letter-spacing:0.020px;color:#a9a9ad">Exposure time</div>
<div class="t" style="left:730.8px;top:284px;font-size:9.4px;line-height:11px;letter-spacing:0.237px;font-weight:bold;color:#2c2c2e">0.050mm</div>
<div class="t" style="left:809.4px;top:284px;font-size:9.4px;line-height:11px;letter-spacing:0.102px;font-weight:bold;color:#2c2c2e">2.200s</div>
<div class="t" style="left:654.0px;top:329px;font-size:12.6px;line-height:14px;letter-spacing:-0.243px;font-weight:bold;color:#2c2c2e">Object List</div>
<div class="t" style="left:668.2px;top:365px;font-size:8.8px;line-height:10px;letter-spacing:0.183px;color:#3a3a3a">Entity5 Fixed.stl</div>
<div class="t" style="left:738.5px;top:578px;font-size:8.8px;line-height:10px;letter-spacing:-0.011px;font-weight:bold;color:#fff">Slice Plate</div>

</body>
</html>
